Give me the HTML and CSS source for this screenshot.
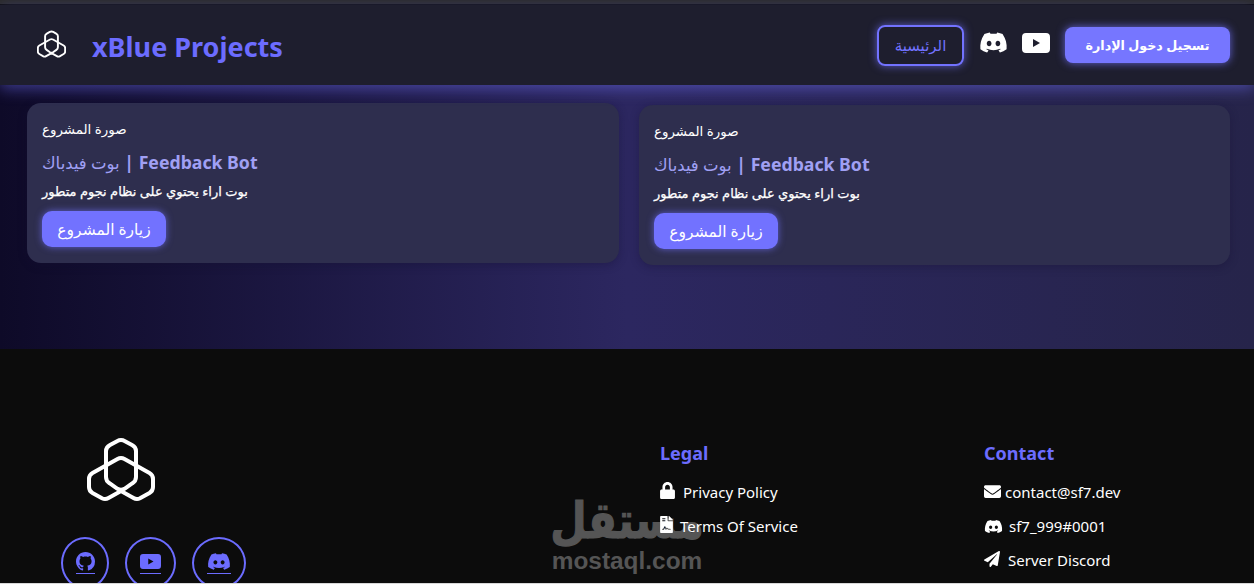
FILE: index.html
```html
<!DOCTYPE html>
<html lang="ar">
<head>
<meta charset="utf-8">
<title>xBlue Projects</title>
<link rel="stylesheet" href="styles.css">
</head>
<body>
<svg class="defs" aria-hidden="true">
  <symbol id="logo" viewBox="0 0 68 65">
    <path d="M30 4.2Q34 2 38 4.2L45 8Q49 10.2 49 14V40Q49 44 45.5 46.2L37.5 51.8Q34 54 30.5 51.8L22.5 46.2Q19 44 19 40V14Q19 10.2 23 8Z"/>
    <path d="M30.5 22Q34 20 37.5 22L62.5 36Q66 38 66 42V50Q66 54 62.5 56L53 61.3Q49.7 63 46.5 61L34 54 21.5 61Q18.3 63 15 61.3L5.5 56Q2 54 2 50V42Q2 38 5.5 36Z"/>
  </symbol>
  <symbol id="discord" viewBox="0 0 640 512">
    <path d="M524.531,69.836a1.5,1.5,0,0,0-.764-.7A485.065,485.065,0,0,0,404.081,32.03a1.816,1.816,0,0,0-1.923.91,337.461,337.461,0,0,0-14.9,30.6,447.848,447.848,0,0,0-134.426,0,309.541,309.541,0,0,0-15.135-30.6,1.89,1.89,0,0,0-1.924-.91A483.689,483.689,0,0,0,116.085,69.137a1.712,1.712,0,0,0-.788.676C39.068,183.651,18.186,294.69,28.43,404.354a2.016,2.016,0,0,0,.765,1.375A487.666,487.666,0,0,0,176.02,479.918a1.9,1.9,0,0,0,2.063-.676A348.2,348.2,0,0,0,208.12,430.4a1.86,1.86,0,0,0-1.019-2.588,321.173,321.173,0,0,1-45.868-21.853,1.885,1.885,0,0,1-.185-3.126c3.082-2.309,6.166-4.711,9.109-7.137a1.819,1.819,0,0,1,1.9-.256c96.229,43.917,200.41,43.917,295.5,0a1.812,1.812,0,0,1,1.924.233c2.944,2.426,6.027,4.851,9.132,7.16a1.884,1.884,0,0,1-.162,3.126,301.407,301.407,0,0,1-45.89,21.83,1.875,1.875,0,0,0-1,2.611,391.055,391.055,0,0,0,30.014,48.815,1.864,1.864,0,0,0,2.063.7A486.048,486.048,0,0,0,610.7,405.729a1.882,1.882,0,0,0,.765-1.352C623.729,277.594,590.933,167.465,524.531,69.836ZM222.491,337.58c-28.972,0-52.844-26.587-52.844-59.239S193.056,219.1,222.491,219.1c29.665,0,53.306,26.82,52.843,59.239C275.334,310.993,251.924,337.58,222.491,337.58Zm195.38,0c-28.971,0-52.843-26.587-52.843-59.239S388.437,219.1,417.871,219.1c29.667,0,53.307,26.82,52.844,59.239C470.715,310.993,447.538,337.58,417.871,337.58Z"/>
  </symbol>
  <symbol id="youtube" viewBox="0 0 28 20">
    <path fill-rule="evenodd" d="M4 0H24Q28 0 28 4V16Q28 20 24 20H4Q0 20 0 16V4Q0 0 4 0ZM11 6V14L18 10Z"/>
  </symbol>
  <symbol id="github" viewBox="0 0 16 16">
    <path d="M8 0C3.58 0 0 3.58 0 8c0 3.54 2.29 6.53 5.47 7.59.4.07.55-.17.55-.38 0-.19-.01-.82-.01-1.49-2.01.37-2.53-.49-2.69-.94-.09-.23-.48-.94-.82-1.13-.28-.15-.68-.52-.01-.53.63-.01 1.08.58 1.23.82.72 1.21 1.87.87 2.33.66.07-.52.28-.87.51-1.07-1.78-.2-3.64-.89-3.64-3.95 0-.87.31-1.59.82-2.15-.08-.2-.36-1.02.08-2.12 0 0 .67-.21 2.2.82.64-.18 1.32-.27 2-.27.68 0 1.36.09 2 .27 1.53-1.04 2.2-.82 2.2-.82.44 1.1.16 1.92.08 2.12.51.56.82 1.27.82 2.15 0 3.07-1.87 3.75-3.65 3.95.29.25.54.73.54 1.48 0 1.07-.01 1.93-.01 2.2 0 .21.15.46.55.38A8.013 8.013 0 0016 8c0-4.42-3.58-8-8-8z"/>
  </symbol>
  <symbol id="lock" viewBox="0 0 448 512">
    <path d="M400 224h-24v-72C376 68.2 307.8 0 224 0S72 68.2 72 152v72H48c-26.5 0-48 21.5-48 48v192c0 26.5 21.5 48 48 48h352c26.5 0 48-21.5 48-48V272c0-26.5-21.5-48-48-48zm-104 0H152v-72c0-39.7 32.3-72 72-72s72 32.3 72 72v72z"/>
  </symbol>
  <symbol id="file" viewBox="0 0 384 512">
    <path d="M224 136V0H24C10.7 0 0 10.7 0 24v464c0 13.3 10.7 24 24 24h336c13.3 0 24-10.7 24-24V160H248c-13.2 0-24-10.8-24-24zM64 72c0-4.42 3.58-8 8-8h80c4.42 0 8 3.58 8 8v16c0 4.42-3.58 8-8 8H72c-4.42 0-8-3.58-8-8V72zm0 64c0-4.42 3.58-8 8-8h80c4.42 0 8 3.58 8 8v16c0 4.42-3.58 8-8 8H72c-4.42 0-8-3.58-8-8v-16zm192.81 248H304c8.84 0 16 7.16 16 16s-7.16 16-16 16h-47.19c-16.45 0-31.27-9.14-38.64-23.86-2.95-5.92-8.09-6.52-10.17-6.52s-7.22.59-10.02 6.19l-7.67 15.34a15.986 15.986 0 0 1-14.31 8.84c-.38 0-.75-.02-1.14-.05-6.45-.45-12-4.75-14.03-10.89L144 354.59l-10.61 31.88c-5.89 17.66-22.38 29.53-41 29.53H80c-8.84 0-16-7.16-16-16s7.16-16 16-16h12.39c4.83 0 9.11-3.08 10.64-7.66l18.19-54.64c3.3-9.81 12.44-16.41 22.78-16.41s19.48 6.59 22.77 16.41l13.88 41.64c19.77-16.19 54.05-9.7 66 14.16 2.02 4.06 5.96 6.5 10.16 6.5zM377 105L279.1 7c-4.5-4.5-10.6-7-17-7H256v128h128v-6.1c0-6.3-2.5-12.4-7-16.9z"/>
  </symbol>
  <symbol id="envelope" viewBox="0 0 512 512">
    <path d="M502.3 190.8c3.9-3.1 9.7-.2 9.7 4.7V400c0 26.5-21.5 48-48 48H48c-26.5 0-48-21.5-48-48V195.6c0-5 5.7-7.8 9.7-4.7 22.4 17.4 52.1 39.5 154.1 113.6 21.1 15.4 56.7 47.8 92.2 47.6 35.7.3 72-32.8 92.3-47.6 102-74.1 131.6-96.3 154-113.7zM256 320c23.2.4 56.6-29.2 73.4-41.4 132.7-96.3 142.8-104.7 173.4-128.7 5.8-4.5 9.2-11.5 9.2-18.9v-19c0-26.5-21.5-48-48-48H48C21.5 64 0 85.5 0 112v19c0 7.4 3.4 14.3 9.2 18.9 30.6 23.9 40.7 32.4 173.4 128.7 16.8 12.2 50.2 41.8 73.4 41.4z"/>
  </symbol>
  <symbol id="plane" viewBox="0 0 512 512">
    <path d="M476 3.2L12.5 270.6c-18.1 10.4-15.8 35.6 2.2 43.2L121 358.4l287.3-253.2c5.5-4.9 13.3 2.6 8.6 8.3L176 407v80.5c0 23.6 28.5 32.9 42.5 15.8L282 426l124.6 52.2c14.2 6 30.4-2.9 33-18.2l72-432C515 7.8 493.3-6.8 476 3.2z"/>
  </symbol>
</svg>

<div class="topbar"></div>
<header class="site-header">
  <div class="brand">
    <svg class="logo logo-small"><use href="#logo"/></svg>
    <a class="brand-name" href="#">xBlue Projects</a>
  </div>
  <nav class="nav">
    <a class="btn-outline" href="#">الرئيسية</a>
    <a class="nav-icon" href="#"><svg class="icon-discord"><use href="#discord"/></svg></a>
    <a class="nav-icon" href="#"><svg class="icon-youtube"><use href="#youtube"/></svg></a>
    <a class="btn-login" href="#">تسجيل دخول الإدارة</a>
  </nav>
</header>

<main class="projects">
  <article class="card card-raised">
    <div class="card-image">صورة المشروع</div>
    <h3 class="card-title"><span class="title-ar">بوت فيدباك</span> | Feedback Bot</h3>
    <p class="card-text">بوت اراء يحتوي على نظام نجوم متطور</p>
    <a class="btn-visit" href="#">زيارة المشروع</a>
  </article>
  <article class="card card-lower">
    <div class="card-image">صورة المشروع</div>
    <h3 class="card-title"><span class="title-ar">بوت فيدباك</span> | Feedback Bot</h3>
    <p class="card-text">بوت اراء يحتوي على نظام نجوم متطور</p>
    <a class="btn-visit" href="#">زيارة المشروع</a>
  </article>
</main>

<footer class="site-footer">
  <div class="watermark">
    <span class="wm-ar">مستقل</span>
    <span class="wm-en">mostaql.com</span>
  </div>
  <div class="footer-brand">
    <svg class="logo logo-large"><use href="#logo"/></svg>
    <div class="socials">
      <a class="social social-gh" href="#"><span class="social-line"><svg class="si-gh"><use href="#github"/></svg></span></a>
      <a class="social social-yt" href="#"><span class="social-line"><svg class="si-yt"><use href="#youtube"/></svg></span></a>
      <a class="social social-dc" href="#"><span class="social-line"><svg class="si-dc"><use href="#discord"/></svg></span></a>
    </div>
  </div>
  <section class="footer-col">
    <h4 class="footer-head">Legal</h4>
    <ul class="footer-list">
      <li><svg class="fi fi-lock"><use href="#lock"/></svg><span class="gap-8">Privacy Policy</span></li>
      <li><svg class="fi fi-file"><use href="#file"/></svg><span class="gap-7">Terms Of Service</span></li>
    </ul>
  </section>
  <section class="footer-col">
    <h4 class="footer-head">Contact</h4>
    <ul class="footer-list">
      <li><svg class="fi fi-env"><use href="#envelope"/></svg><span class="gap-4">contact@sf7.dev</span></li>
      <li><svg class="fi fi-dc"><use href="#discord"/></svg><span class="gap-6">sf7_999#0001</span></li>
      <li><svg class="fi fi-plane"><use href="#plane"/></svg><span class="gap-8">Server Discord</span></li>
    </ul>
  </section>
</footer>
</body>
</html>
```
FILE: styles.css
```css
* { box-sizing: border-box; }
html, body { margin: 0; height: 584px; overflow: hidden; }
body {
  display: flex;
  flex-direction: column;
  background: #d8d8d8;
  color: #fff;
  font-family: "Noto Sans", "Open Sans", "DejaVu Sans", sans-serif;
}
a { color: inherit; text-decoration: none; }
.defs { display: none; }

.topbar { height: 5px; flex: none; background: #2a2a2a; border-bottom: 1px solid #0d0d0d; }

.site-header {
  flex: none;
  height: 80px;
  display: flex;
  align-items: center;
  justify-content: space-between;
  padding: 0 24px 0 37px;
  background: #1e1e2e;
  box-shadow: 0 4px 14px rgba(115, 115, 255, .45);
  position: relative;
  z-index: 1;
}
.brand { display: flex; align-items: center; gap: 26px; }
.logo { fill: none; stroke: #fff; overflow: visible; display: block; }
.logo-small { width: 29px; height: 28px; stroke-width: 4.5px; margin-top: -3px; }
.logo-large { width: 68px; height: 65px; stroke-width: 4px; margin-left: 26px; }
.brand-name { color: #6c6cff; font-size: 27px; font-weight: 700; padding-top: 2px; }

.nav { display: flex; align-items: center; }
.btn-outline {
  width: 87px;
  height: 41px;
  display: flex;
  align-items: center;
  justify-content: center;
  border: 2px solid #7272ff;
  border-radius: 8px;
  color: #7272ff;
  font-size: 15px;
  box-shadow: 0 0 8px rgba(115, 115, 255, .7);
  margin-right: 15px;
}
.nav-icon { display: flex; fill: #fff; }
.icon-discord { width: 29px; height: 23px; margin-top: -5px; margin-right: 14px; }
.icon-youtube { width: 28px; height: 20px; margin-top: -5px; margin-right: 15px; }
.btn-login {
  width: 165px;
  height: 36px;
  display: flex;
  align-items: center;
  justify-content: center;
  border-radius: 8px;
  background: #7676ff;
  color: #fff;
  font-size: 12.7px;
  font-weight: 700;
  box-shadow: 0 0 8px rgba(115, 115, 255, .8);
  margin-top: -1px;
}

.projects {
  flex: none;
  height: 264px;
  display: grid;
  grid-template-columns: 592px 591px;
  column-gap: 20px;
  align-items: start;
  padding: 18px 0 0 27px;
  background: linear-gradient(90deg, #0e0a28 0%, #2c2760 50%, #26244a 100%);
}
.card {
  height: 160px;
  padding: 15px;
  border-radius: 14px;
  background: #2e2e4e;
  box-shadow: 0 2px 8px rgba(20, 15, 50, .35);
}
.card-lower { margin-top: 2px; }
.card-image { font-size: 13.4px; line-height: 22px; height: 22px; }
.card-title { margin: 9px 0 0; height: 26px; font-size: 17.7px; line-height: 26px; font-weight: 700; color: #a0a0f4; }
.title-ar { font-weight: 400; font-size: 16.5px; }
.card-text { margin: 5px 0 0; height: 22px; font-size: 13px; line-height: 22px; font-weight: 400; -webkit-text-stroke: .25px #fff; }
.btn-visit {
  width: 124px;
  height: 36px;
  margin-top: 9px;
  display: flex;
  align-items: center;
  justify-content: center;
  border-radius: 10px;
  background: #7272ff;
  font-size: 15.5px;
  box-shadow: 0 0 7px rgba(115, 115, 255, .7);
}

.site-footer {
  flex: none;
  height: 234px;
  position: relative;
  overflow: hidden;
  background: #0c0c0c;
  display: grid;
  grid-template-columns: 599px 324px 1fr;
  padding: 88px 0 0 61px;
}
.socials { display: flex; gap: 16px; margin-top: 35px; }
.social {
  height: 52px;
  display: flex;
  align-items: center;
  justify-content: center;
  border: 2px solid #6c6cff;
  border-radius: 50%;
  fill: #6c6cff;
}
.social-gh { width: 48px; }
.social-yt { width: 51px; }
.social-dc { width: 54px; }
.social-line { display: flex; padding-bottom: 2px; border-bottom: 1px solid #6c6cff; }
.si-gh { width: 19px; height: 19px; }
.si-yt { width: 21px; height: 15px; margin: 2px 0; }
.si-dc { width: 24px; height: 19px; }

.footer-col { position: relative; z-index: 1; padding-top: 1px; }
.footer-head { margin: 0 0 7px; height: 30px; font-size: 18px; line-height: 30px; font-weight: 700; color: #6c6cff; }
.footer-list { list-style: none; margin: 0; padding: 0; font-size: 15px; }
.footer-list li { height: 34px; display: flex; align-items: center; }
.fi { fill: #fff; flex: none; }
.fi-lock { width: 15px; height: 17px; margin-top: -4px; }
.fi-file { width: 13px; height: 17px; margin-top: -4px; }
.fi-env { width: 17px; height: 17px; margin-top: -1px; }
.fi-dc { width: 19px; height: 15px; }
.fi-plane { width: 16px; height: 16px; margin-top: -2px; }
.gap-4 { margin-left: 4px; }
.gap-6 { margin-left: 6px; }
.gap-7 { margin-left: 7px; }
.gap-8 { margin-left: 8px; }

.watermark {
  position: absolute;
  left: 552px;
  top: 152px;
  width: 150px;
  display: flex;
  flex-direction: column;
  align-items: center;
  color: #555;
  line-height: 1;
}
.wm-ar {
  font-family: "DejaVu Sans", sans-serif;
  font-weight: 700;
  font-size: 42px;
  height: 48px;
  -webkit-text-stroke: 1px #555;
  transform: scaleY(1.2);
}
.wm-en { font-family: "Liberation Sans", sans-serif; font-weight: 700; font-size: 24.4px; white-space: nowrap; }
```
